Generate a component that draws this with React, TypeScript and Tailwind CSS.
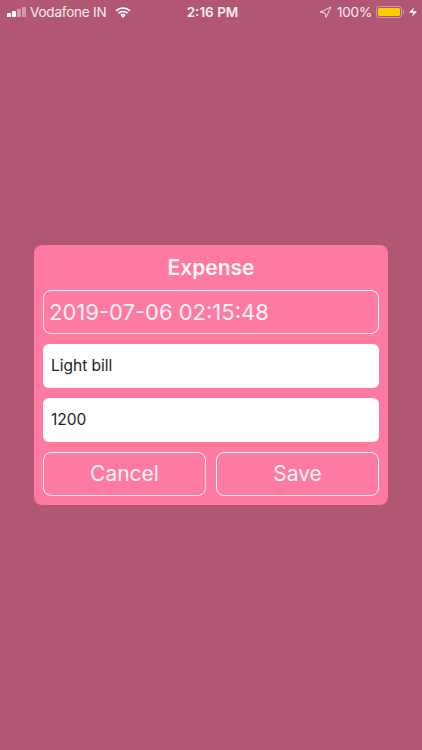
import { Navigation, Zap } from 'lucide-react';

const font = { fontFamily: 'Inter, "Liberation Sans", sans-serif' };

function StatusBar() {
  return (
    <div className="absolute inset-x-0 top-0 flex h-6 items-center justify-between pl-[7px] pr-[4px] text-[13.5px] text-white/90">
      <div className="flex w-[150px] items-center">
        <div className="flex items-end gap-[1px]">
          <span className="h-[4px] w-[4px] rounded-[0.5px] bg-white" />
          <span className="h-[6px] w-[4px] rounded-[0.5px] bg-white" />
          <span className="h-[8px] w-[4px] rounded-[0.5px] bg-white/40" />
          <span className="h-[10px] w-[4px] rounded-[0.5px] bg-white/40" />
        </div>
        <span className="ml-[4px] tracking-[-0.2px]">Vodafone IN</span>
        <svg className="ml-[8px]" width="16" height="11" viewBox="0 0 16 11" fill="none" stroke="white" strokeWidth="1.7">
          <path d="M1 3.8C5 0.2 11 0.2 15 3.8" />
          <path d="M3.4 6.2C6 3.9 10 3.9 12.6 6.2" />
          <path d="M5.9 8.5C7.1 7.5 8.9 7.5 10.1 8.5" />
          <path d="M8 11L6.4 9.3C7.3 8.6 8.7 8.6 9.6 9.3Z" fill="white" stroke="none" />
        </svg>
      </div>
      <span className="font-semibold">2:16 PM</span>
      <div className="flex w-[150px] items-center justify-end">
        <Navigation size={13} className="mr-[5px]" strokeWidth={1.6} />
        <span className="tracking-[-0.2px]">100%</span>
        <div className="ml-[4px] flex h-[12px] w-[26px] items-center rounded-[3px] border border-white/40 p-[1px]">
          <div className="h-full w-full rounded-[1.5px] bg-[#ffcc00]" />
        </div>
        <span className="ml-[1px] h-[4px] w-[1px] bg-white/40" />
        <Zap size={10} className="ml-[4px]" fill="white" strokeWidth={0} />
      </div>
    </div>
  );
}

export default function App() {
  return (
    <div className="relative flex h-[750px] w-[422px] items-center justify-center overflow-hidden bg-[#b25773]" style={font}>
      <StatusBar />
      <div className="flex w-[354px] flex-col rounded-[8px] bg-[#ff7aa0] px-[9px] pb-[9px]">
        <h1 className="flex h-[45px] items-center justify-center text-[21px] font-semibold text-white/95">Expense</h1>
        <div className="flex h-[44px] items-center rounded-[8px] border border-white/90 pl-[5px] text-[22px] text-white/90">
          2019-07-06 02:15:48
        </div>
        <div className="mt-[10px] flex h-[44px] items-center rounded-[6px] bg-white pl-[8px] text-[15.5px] text-[#222]">Light bill</div>
        <div className="mt-[10px] flex h-[44px] items-center rounded-[6px] bg-white pl-[8px] text-[15.5px] text-[#222]">1200</div>
        <div className="mt-[10px] flex gap-[10px]">
          <button className="h-[44px] flex-1 rounded-[8px] border border-white/90 text-[21px] text-white/90">Cancel</button>
          <button className="h-[44px] flex-1 rounded-[8px] border border-white/90 text-[21px] text-white/90">Save</button>
        </div>
      </div>
    </div>
  );
}
